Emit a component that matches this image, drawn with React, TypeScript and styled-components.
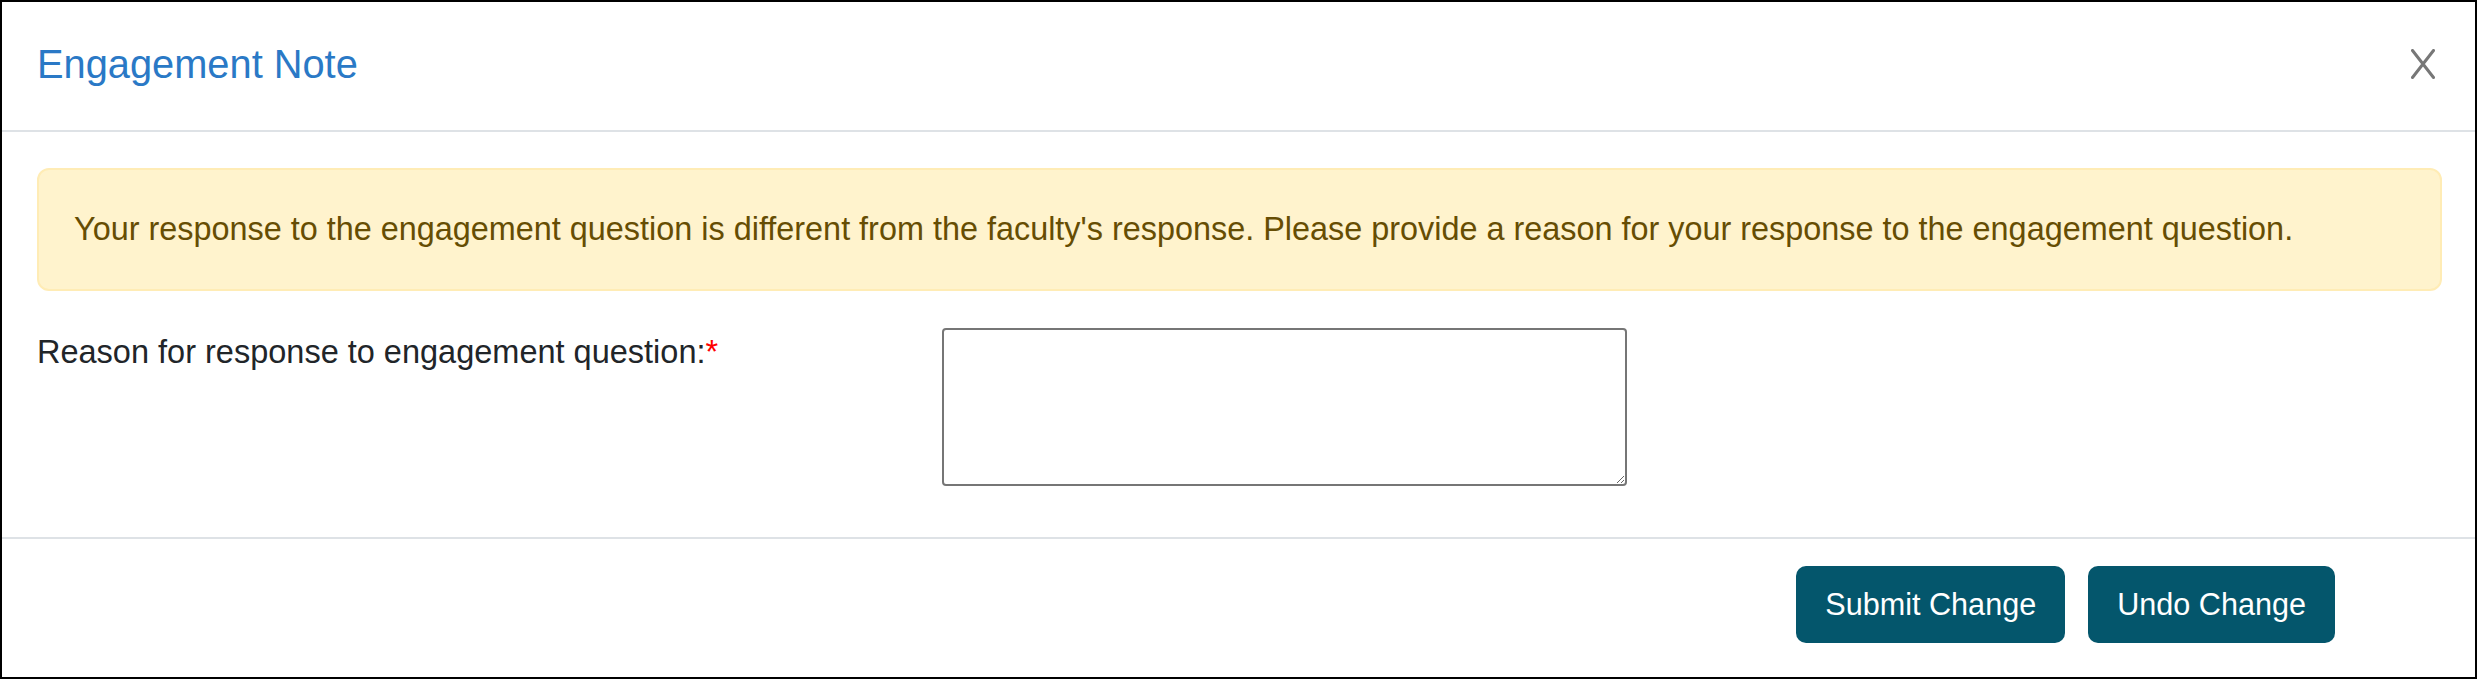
import styled, { createGlobalStyle } from "styled-components"

const GlobalStyle = createGlobalStyle`
    html, body {
        margin: 0;
        padding: 0;
        background: #fff;
    }
    * {
        box-sizing: border-box;
    }
`

const Modal = styled.div`
    width: 2477px;
    height: 679px;
    border: 2px solid #000;
    background: #fff;
    display: flex;
    flex-direction: column;
    overflow: hidden;
    font-family: "Liberation Sans", Arial, sans-serif;
    color: #212529;
`

const Header = styled.div`
    display: flex;
    align-items: center;
    justify-content: space-between;
    padding: 32px 40px 36px 35px;
    border-bottom: 2px solid #dee2e6;
`

const Title = styled.h5`
    margin: 0;
    font-size: 39.8px;
    line-height: 60px;
    font-weight: 400;
    color: #2a79c6;
`

const CloseButton = styled.button`
    width: 24px;
    height: 30px;
    padding: 0;
    border: 0;
    background: transparent;
    display: flex;
    cursor: pointer;
`

const Body = styled.div`
    padding: 36px 33px 51px 35px;
`

const Alert = styled.div`
    padding: 35px 35px 36px;
    margin-bottom: 37px;
    background: #fff3cd;
    border: 2px solid #ffecb5;
    border-radius: 12px;
    color: #664d03;
    font-size: 32.4px;
    line-height: 48px;
`

const FieldRow = styled.div`
    display: flex;
    align-items: flex-start;
`

const Label = styled.label`
    width: 905px;
    flex-shrink: 0;
    font-size: 32.5px;
    line-height: 48px;
    color: #212529;
`

const Required = styled.span`
    color: #ff0000;
`

const TextArea = styled.textarea`
    display: block;
    width: 685px;
    height: 158px;
    margin: 0;
    border: 2px solid #767676;
    border-radius: 4px;
    font-family: "Liberation Sans", Arial, sans-serif;
    font-size: 28px;
    resize: both;
    outline: none;
`

const Footer = styled.div`
    display: flex;
    justify-content: flex-end;
    gap: 23px;
    padding: 27px 140px 34px 0;
    border-top: 2px solid #dee2e6;
`

const ActionButton = styled.button`
    height: 77px;
    padding: 16px 29px;
    border: 0;
    border-radius: 10px;
    background: #04566c;
    color: #fff;
    font-family: "Liberation Sans", Arial, sans-serif;
    font-size: 30.6px;
    line-height: 45px;
    cursor: pointer;
`

const CloseIcon = () => <svg width="24" height="30" viewBox="0 0 24 30">
    <path d="M1.5 1.5 L22.5 28.5 M22.5 1.5 L1.5 28.5" stroke="#777" strokeWidth="3" strokeLinecap="round" fill="none" />
</svg>

export default function App() {
    return <>
        <GlobalStyle />
        <Modal>
            <Header>
                <Title>Engagement Note</Title>
                <CloseButton aria-label="Close"><CloseIcon /></CloseButton>
            </Header>
            <Body>
                <Alert>Your response to the engagement question is different from the faculty's response. Please provide a reason for your response to the engagement question.</Alert>
                <FieldRow>
                    <Label htmlFor="reason">Reason for response to engagement question:<Required>*</Required></Label>
                    <TextArea id="reason" />
                </FieldRow>
            </Body>
            <Footer>
                <ActionButton>Submit Change</ActionButton>
                <ActionButton>Undo Change</ActionButton>
            </Footer>
        </Modal>
    </>
}
